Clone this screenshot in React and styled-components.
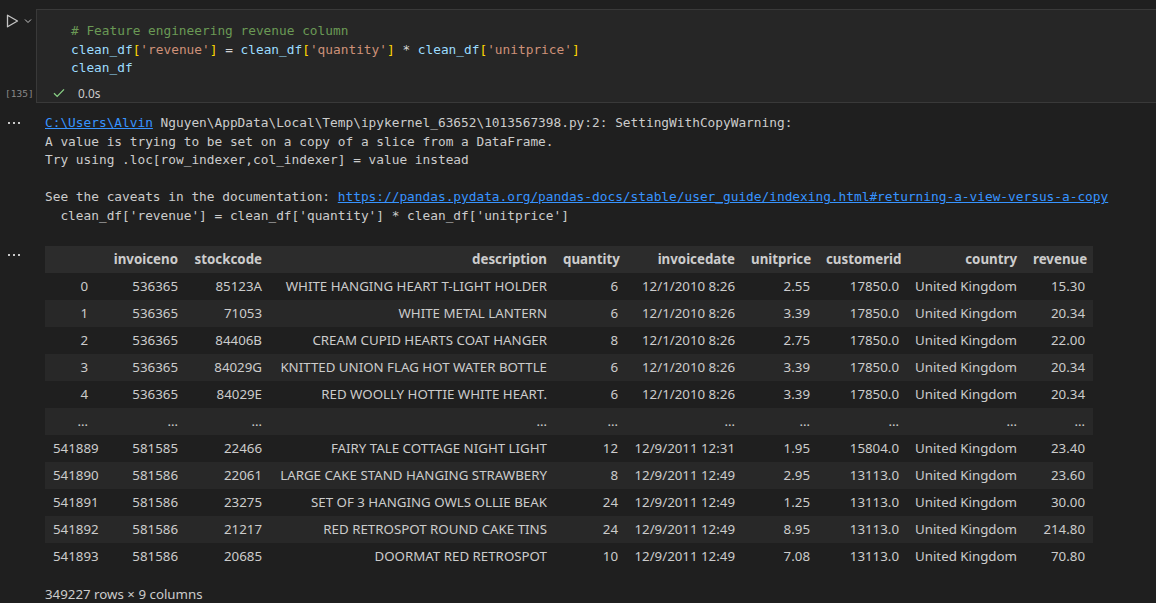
import React from "react";
import styled, { createGlobalStyle } from "styled-components";

const Global = createGlobalStyle`
  html, body { margin: 0; padding: 0; background: #1f1f1f; }
  body { width: 1156px; height: 603px; overflow: hidden; }
`;

const MONO = `"DejaVu Sans Mono", "Liberation Mono", monospace`;
const SANS = `"Noto Sans", "Open Sans", sans-serif`;

const Page = styled.div`
  padding-top: 9px;
  color: #cccccc;
`;

const Cell = styled.div`
  display: flex;
`;

const Gutter = styled.div`
  width: 36px;
  flex: none;
  display: flex;
  flex-direction: column;
  justify-content: space-between;
  padding: 4px 0 0 0;
`;

const RunRow = styled.div`
  display: flex;
  align-items: center;
  gap: 5px;
  padding-left: 6px;
  height: 16px;
`;

const ExecCount = styled.div`
  font-family: ${MONO};
  font-size: 9.5px;
  color: #8a8a8a;
  padding-left: 5px;
  height: 18px;
  line-height: 18px;
`;

const EditorBox = styled.div`
  flex: 1;
  background: #262626;
  border: 1px solid #393939;
  border-right: none;
  height: 94px;
  box-sizing: border-box;
`;

const Code = styled.pre`
  margin: 0;
  padding: 12px 0 0 34px;
  font-family: ${MONO};
  font-size: 12.8px;
  line-height: 18.6px;
  color: #d4d4d4;
`;

const Tok = styled.span`
  color: ${(p) => p.c};
`;

const Status = styled.div`
  display: flex;
  align-items: center;
  gap: 13px;
  padding-left: 16px;
  height: 22px;
  margin-top: 4px;
  font-family: ${SANS};
  font-size: 11.8px;
  color: #cccccc;
`;

const OutRow = styled.div`
  display: flex;
  margin-top: ${(p) => p.mt}px;
`;

const OutGutter = styled.div`
  width: 45px;
  flex: none;
  padding-top: ${(p) => p.pt}px;
  padding-left: 8px;
  box-sizing: border-box;
`;

const Dots = styled.div`
  display: flex;
  gap: 3px;
  span {
    width: 2px;
    height: 2px;
    background: #c8c8c8;
  }
`;

const OutText = styled.pre`
  margin: 0;
  font-family: ${MONO};
  font-size: 12.8px;
  line-height: 18.6px;
  color: #cccccc;
  a {
    color: #3794ff;
    text-decoration: underline;
  }
`;

const Table = styled.table`
  border-collapse: collapse;
  table-layout: fixed;
  width: 1048px;
  font-family: ${SANS};
  font-size: 13.3px;
  color: #cccccc;
`;

const Th = styled.th`
  height: 27px;
  padding: 0 8px;
  text-align: right;
  font-weight: 700;
  white-space: nowrap;
  background: #2c2c2c;
`;

const Tr = styled.tr`
  &:nth-child(even) { background: #282828; }
`;

const Td = styled.td`
  height: 27px;
  padding: 0 8px;
  text-align: right;
  white-space: nowrap;
`;

const Footer = styled.div`
  margin-top: 15px;
  font-family: ${SANS};
  font-size: 13.3px;
  color: #cccccc;
`;

const widths = [51, 90, 84, 285, 71, 117, 75, 89, 118, 68];
const headers = ["", "invoiceno", "stockcode", "description", "quantity", "invoicedate", "unitprice", "customerid", "country", "revenue"];

const rows = [
  ["0", "536365", "85123A", "WHITE HANGING HEART T-LIGHT HOLDER", "6", "12/1/2010 8:26", "2.55", "17850.0", "United Kingdom", "15.30"],
  ["1", "536365", "71053", "WHITE METAL LANTERN", "6", "12/1/2010 8:26", "3.39", "17850.0", "United Kingdom", "20.34"],
  ["2", "536365", "84406B", "CREAM CUPID HEARTS COAT HANGER", "8", "12/1/2010 8:26", "2.75", "17850.0", "United Kingdom", "22.00"],
  ["3", "536365", "84029G", "KNITTED UNION FLAG HOT WATER BOTTLE", "6", "12/1/2010 8:26", "3.39", "17850.0", "United Kingdom", "20.34"],
  ["4", "536365", "84029E", "RED WOOLLY HOTTIE WHITE HEART.", "6", "12/1/2010 8:26", "3.39", "17850.0", "United Kingdom", "20.34"],
  ["…", "…", "…", "…", "…", "…", "…", "…", "…", "…"],
  ["541889", "581585", "22466", "FAIRY TALE COTTAGE NIGHT LIGHT", "12", "12/9/2011 12:31", "1.95", "15804.0", "United Kingdom", "23.40"],
  ["541890", "581586", "22061", "LARGE CAKE STAND HANGING STRAWBERY", "8", "12/9/2011 12:49", "2.95", "13113.0", "United Kingdom", "23.60"],
  ["541891", "581586", "23275", "SET OF 3 HANGING OWLS OLLIE BEAK", "24", "12/9/2011 12:49", "1.25", "13113.0", "United Kingdom", "30.00"],
  ["541892", "581586", "21217", "RED RETROSPOT ROUND CAKE TINS", "24", "12/9/2011 12:49", "8.95", "13113.0", "United Kingdom", "214.80"],
  ["541893", "581586", "20685", "DOORMAT RED RETROSPOT", "10", "12/9/2011 12:49", "7.08", "13113.0", "United Kingdom", "70.80"],
];

const V = "#9cdcfe";
const S = "#ce9178";
const B = "#ffd700";
const C = "#6a9955";

function RunIcon() {
  return (
    <svg width="13" height="14" viewBox="0 0 13 14">
      <path d="M1.5 1.2 L11.5 7 L1.5 12.8 Z" fill="none" stroke="#c5c5c5" strokeWidth="1.3" strokeLinejoin="round" />
    </svg>
  );
}

function Chevron() {
  return (
    <svg width="8" height="6" viewBox="0 0 8 6">
      <path d="M1 1.5 L4 4.5 L7 1.5" fill="none" stroke="#c5c5c5" strokeWidth="1" />
    </svg>
  );
}

function Check() {
  return (
    <svg width="12" height="10" viewBox="0 0 12 10">
      <path d="M1 5.2 L4.2 8.4 L11 1.4" fill="none" stroke="#89d185" strokeWidth="1.3" />
    </svg>
  );
}

function Ellipsis() {
  return (
    <Dots>
      <span />
      <span />
      <span />
    </Dots>
  );
}

export default function App() {
  return (
    <Page>
      <Global />
      <Cell>
        <Gutter>
          <RunRow>
            <RunIcon />
            <Chevron />
          </RunRow>
          <ExecCount>[135]</ExecCount>
        </Gutter>
        <EditorBox>
          <Code>
            <Tok c={C}># Feature engineering revenue column</Tok>
            {"\n"}
            <Tok c={V}>clean_df</Tok><Tok c={B}>[</Tok><Tok c={S}>'revenue'</Tok><Tok c={B}>]</Tok> = <Tok c={V}>clean_df</Tok><Tok c={B}>[</Tok><Tok c={S}>'quantity'</Tok><Tok c={B}>]</Tok> * <Tok c={V}>clean_df</Tok><Tok c={B}>[</Tok><Tok c={S}>'unitprice'</Tok><Tok c={B}>]</Tok>
            {"\n"}
            <Tok c={V}>clean_df</Tok>
          </Code>
          <Status>
            <Check />
            <span>0.0s</span>
          </Status>
        </EditorBox>
      </Cell>

      <OutRow mt={11}>
        <OutGutter pt={8}>
          <Ellipsis />
        </OutGutter>
        <OutText>
          <a>C:\Users\Alvin</a>{" Nguyen\\AppData\\Local\\Temp\\ipykernel_63652\\1013567398.py:2: SettingWithCopyWarning:\nA value is trying to be set on a copy of a slice from a DataFrame.\nTry using .loc[row_indexer,col_indexer] = value instead\n\nSee the caveats in the documentation: "}
          <a>https://pandas.pydata.org/pandas-docs/stable/user_guide/indexing.html#returning-a-view-versus-a-copy</a>
          {"\n  clean_df['revenue'] = clean_df['quantity'] * clean_df['unitprice']"}
        </OutText>
      </OutRow>

      <OutRow mt={20}>
        <OutGutter pt={8}>
          <Ellipsis />
        </OutGutter>
        <div>
          <Table>
            <colgroup>
              {widths.map((w, i) => (
                <col key={i} style={{ width: w }} />
              ))}
            </colgroup>
            <thead>
              <tr>
                {headers.map((h, i) => (
                  <Th key={i}>{h}</Th>
                ))}
              </tr>
            </thead>
            <tbody>
              {rows.map((r, i) => (
                <Tr key={i}>
                  {r.map((v, j) => (
                    <Td key={j}>{v}</Td>
                  ))}
                </Tr>
              ))}
            </tbody>
          </Table>
          <Footer>349227 rows × 9 columns</Footer>
        </div>
      </OutRow>
    </Page>
  );
}
